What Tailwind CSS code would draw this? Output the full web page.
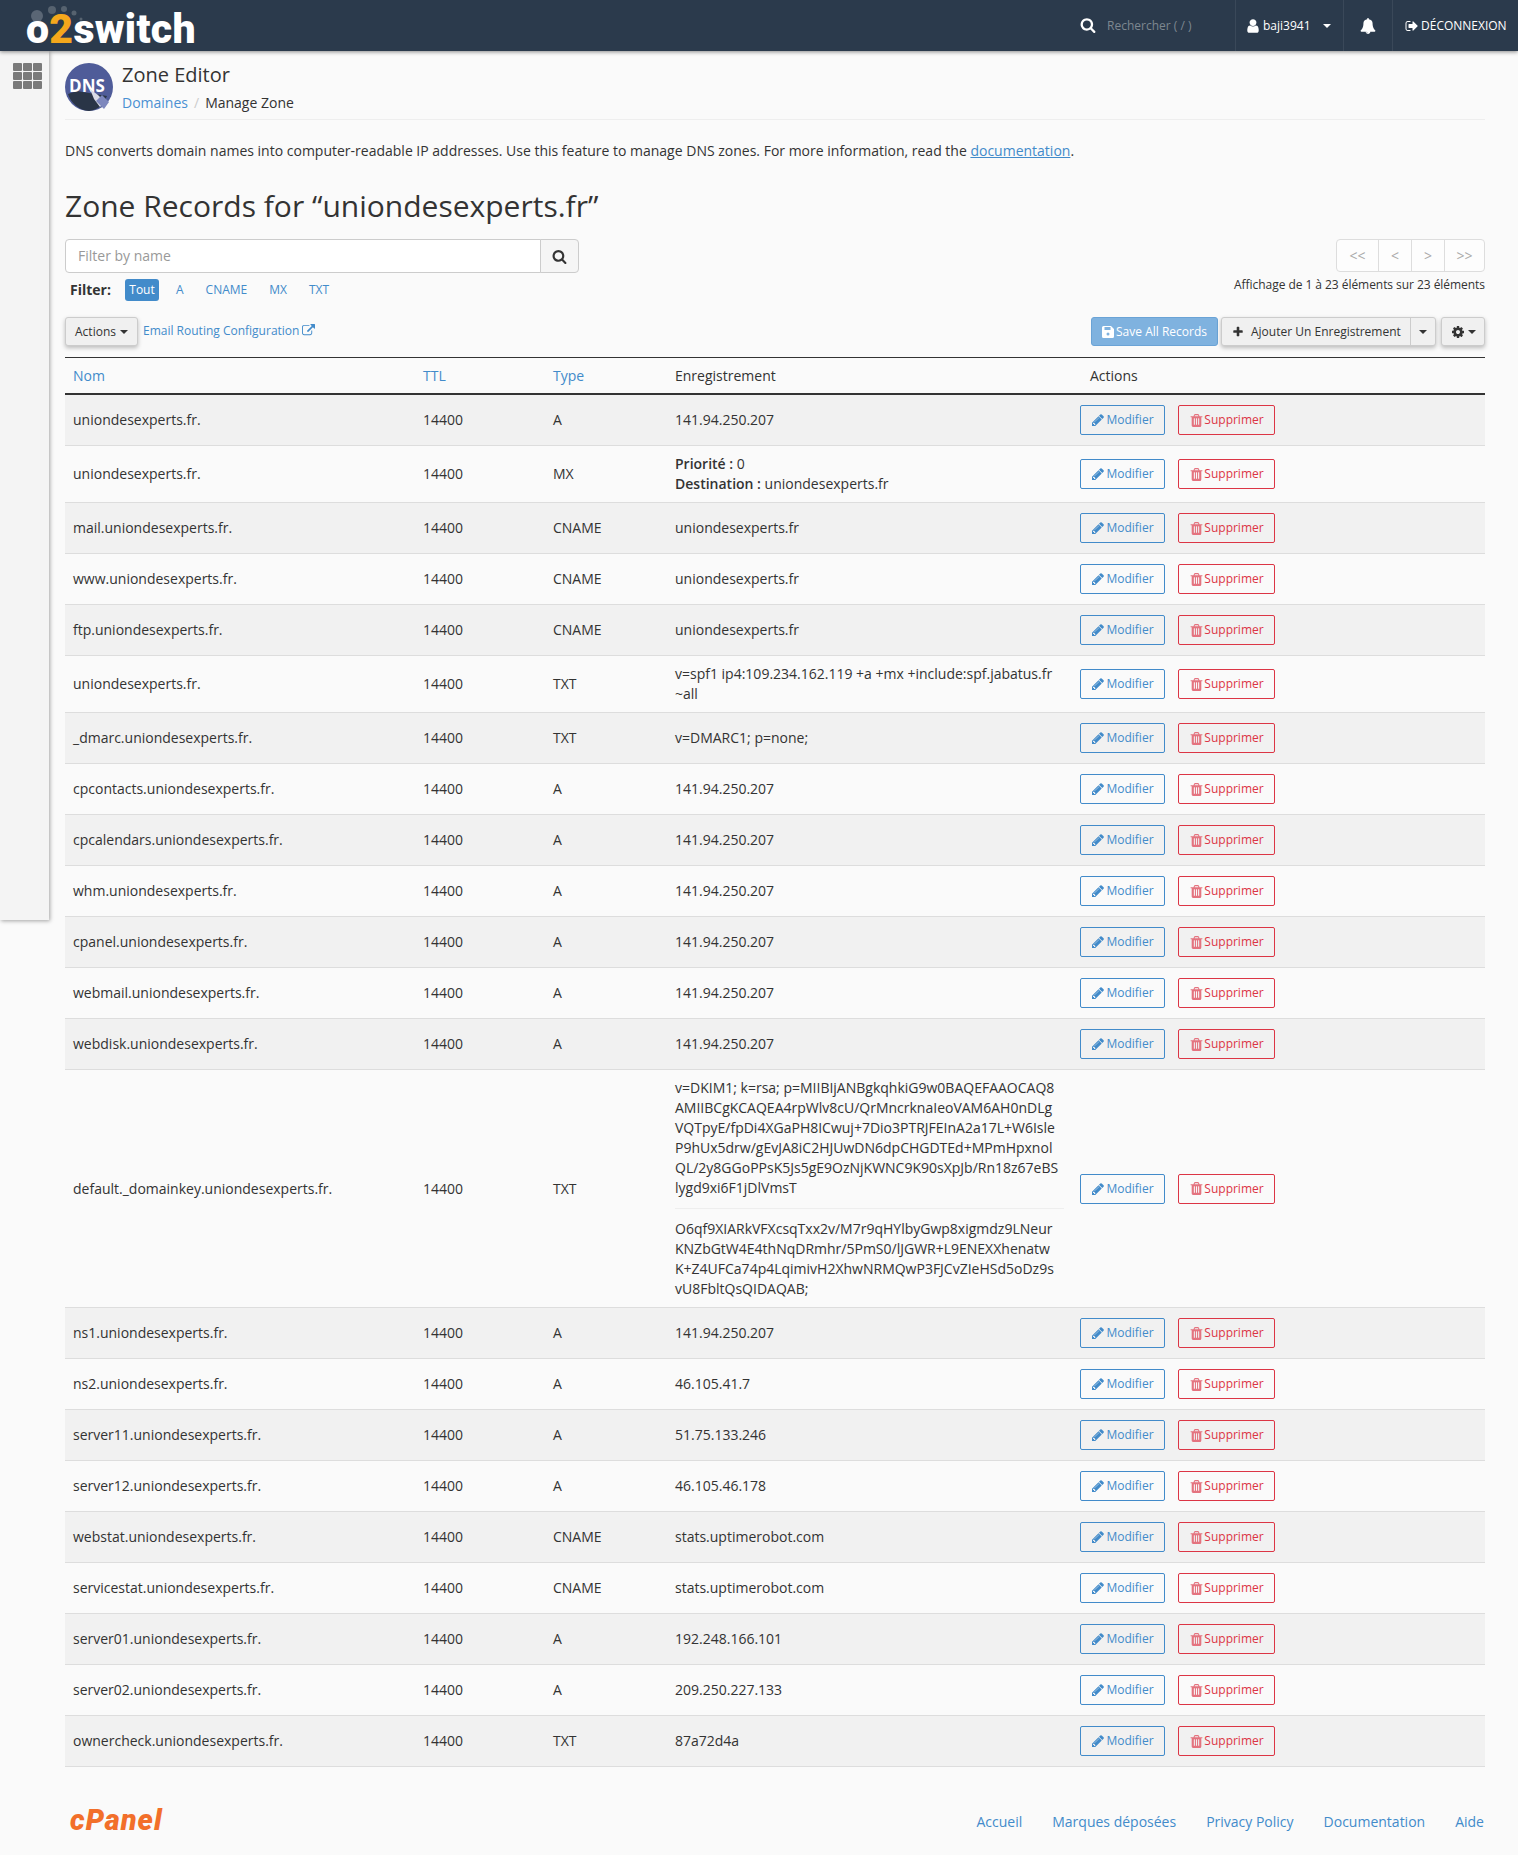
<!DOCTYPE html>
<html lang="fr">
<head>
  <meta charset="UTF-8">
  <title>Zone Editor</title>
  <script src="https://cdn.jsdelivr.net/npm/@tailwindcss/browser@4"></script>
</head>
<body class="bg-[#fafafa] text-[#333] text-[14px] leading-[20px] font-['Open_Sans',sans-serif]">
  <!-- Top bar -->
  <header class="relative z-20 h-[51px] bg-[#2b3a4c] shadow-[0_1px_4px_rgba(0,0,0,0.45)] flex items-center text-white">
    <div class="relative ml-[26px] w-[170px] h-[51px]">
      <svg class="absolute left-[4px] top-[4px]" width="80" height="20" viewBox="0 0 80 20">
        <circle cx="7" cy="12" r="6" fill="#5a6675"/><circle cx="22" cy="6" r="4" fill="#56626f"/><circle cx="34" cy="5" r="3" fill="#56626f"/><circle cx="44" cy="9" r="2.500" fill="#56626f"/><circle cx="51" cy="15" r="1.500" fill="#56626f"/>
      </svg>
      <div class="absolute left-0 top-[6px] text-[41px] leading-[46px] font-black tracking-[0.3px] font-['Roboto',sans-serif] whitespace-nowrap">o<span class="text-[#f5a81c]">2</span>switch</div>
    </div>
    <div class="flex-1"></div>
    <svg class="w-[16px] h-[16px] -mt-[2px] fill-white" viewBox="0 0 1792 1792"><path d="M1216 832q0-185-131.500-316.500t-316.500-131.500-316.500 131.500-131.500 316.500 131.500 316.500 316.500 131.500 316.500-131.500 131.500-316.500zm512 832q0 52-38 90t-90 38q-54 0-90-38l-343-342q-179 124-399 124-143 0-273.500-55.500t-225-150-150-225-55.500-273.500 55.500-273.500 150-225 225-150 273.500-55.500 273.500 55.500 225 150 150 225 55.500 273.500q0 220-124 399l343 343q37 37 37 90z"/></svg>
    <div class="ml-[11px] w-[128px] text-[12px] text-[#7d8790]">Rechercher ( / )</div>
    <div class="h-[51px] w-[108px] border-l border-[#3a4859] flex items-center pl-[9px] text-[12px]">
      <svg class="w-[16px] h-[16px] fill-white" viewBox="0 0 1792 1792"><path d="M1536 1399q0 109-62.500 187t-150.500 78h-854q-88 0-150.500-78t-62.500-187q0-85 8.500-160.500t31.500-152 58.500-131 94-89 134.500-34.500q131 128 313 128t313-128q76 0 134.500 34.500t94 89 58.500 131 31.500 152 8.500 160.500zm-256-887q0 159-112.500 271.500t-271.500 112.500-271.500-112.500-112.500-271.500 112.500-271.500 271.500-112.500 271.500 112.500 112.500 271.500z"/></svg>
      <span class="ml-[2px]">baji3941</span>
      <span class="ml-[12px] w-0 h-0 border-x-[4px] border-x-transparent border-t-[4px] border-t-white"></span>
    </div>
    <div class="h-[51px] w-[49px] border-l border-[#3a4859] flex items-center justify-center">
      <svg class="w-[16px] h-[16px] fill-white" viewBox="0 0 1792 1792"><path d="M912 1696q0-16-16-16-59 0-101.500-42.500t-42.500-101.500q0-16-16-16t-16 16q0 73 51.500 124.500t124.500 51.500q16 0 16-16zm816-288q0 52-38 90t-90 38h-448q0 106-75 181t-181 75-181-75-75-181h-448q-52 0-90-38t-38-90q50-42 91-88t85-119.500 74.500-158.500 50-206 19.500-260q0-152 117-282.500t307-158.500q-8-19-8-39 0-40 28-68t68-28 68 28 28 68q0 20-8 39 190 28 307 158.500t117 282.500q0 139 19.500 260t50 206 74.500 158.500 85 119.500 91 88z"/></svg>
    </div>
    <div class="h-[51px] w-[126px] border-l border-[#3a4859] flex items-center pl-[12px] text-[12px]">
      <svg class="w-[14px] h-[14px] fill-white" viewBox="0 0 1792 1792"><path d="M704 1440q0 4 1 20t.5 26.500-3 23.500-10 19.500-20.500 6.500h-320q-119 0-203.500-84.500t-84.500-203.500v-704q0-119 84.500-203.500t203.500-84.500h320q13 0 22.500 9.500t9.500 22.500q0 4 1 20t.5 26.500-3 23.500-10 19.500-20.500 6.500h-320q-66 0-113 47t-47 113v704q0 66 47 113t113 47h312l11.500 1 11.500 3 8 5.500 7 9 2 13.500zm928-544q0 26-19 45l-544 544q-19 19-45 19t-45-19-19-45v-288h-448q-26 0-45-19t-19-45v-384q0-26 19-45t45-19h448v-288q0-26 19-45t45-19 45 19l544 544q19 19 19 45z"/></svg>
      <span class="ml-[2px]">DÉCONNEXION</span>
    </div>
  </header>

  <div class="flex items-start">
    <!-- Side rail -->
    <aside class="w-[49px] h-[869px] shrink-0 bg-[#f4f4f4] shadow-[1px_1px_4px_rgba(0,0,0,0.35)] pt-[12px] pl-[13px]">
      <div class="grid grid-cols-3 gap-[1.500px] w-[29px]">
        <span class="h-[7.500px] rounded-[1px] bg-[#7a7a7a]"></span><span class="h-[7.500px] rounded-[1px] bg-[#7a7a7a]"></span><span class="h-[7.500px] rounded-[1px] bg-[#7a7a7a]"></span>
        <span class="h-[7.500px] rounded-[1px] bg-[#7a7a7a]"></span><span class="h-[7.500px] rounded-[1px] bg-[#7a7a7a]"></span><span class="h-[7.500px] rounded-[1px] bg-[#7a7a7a]"></span>
        <span class="h-[7.500px] rounded-[1px] bg-[#7a7a7a]"></span><span class="h-[7.500px] rounded-[1px] bg-[#7a7a7a]"></span><span class="h-[7.500px] rounded-[1px] bg-[#7a7a7a]"></span>
      </div>
    </aside>

    <main class="flex-1 min-w-0 pl-[16px] pr-[33px]">
      <!-- Page title -->
      <div class="h-[69px] border-b border-[#eee] pt-[12px] flex">
        <svg class="w-[48px] h-[48px] shrink-0" viewBox="0 0 48 48">
          <circle cx="24" cy="24" r="24" fill="#4f5c99"/>
          <path d="M3 31 L12 28 L42 33 L38 41 A24 24 0 0 1 24 48 A24 24 0 0 1 3 31Z" fill="#2a3547"/>
          <text x="22" y="29" text-anchor="middle" fill="#fff" font-size="17" font-weight="700" font-family="Open Sans">DNS</text>
          <path d="M25 26 L29 36 L35 44 L40 39 L33 32Z" fill="#d9dbe6"/>
          <path d="M31 38 L37 32 L44 39 L39 46Z" fill="#7d87bd"/>
        </svg>
        <div class="ml-[9px]">
          <h1 class="text-[20px] leading-[24px]">Zone Editor</h1>
          <div class="mt-[6px] flex"><a class="text-[#4a90d2]">Domaines</a><span class="mx-[6px] text-[#ccc]">/</span><span>Manage Zone</span></div>
        </div>
      </div>

      <p class="mt-[21px]">DNS converts domain names into computer-readable IP addresses. Use this feature to manage DNS zones. For more information, read the <a class="text-[#428bca] underline">documentation</a>.</p>

      <h2 class="mt-[28px] text-[30px] leading-[33px]">Zone Records for “uniondesexperts.fr”</h2>

      <!-- Filter and pagination -->
      <div class="mt-[17px] flex justify-between items-start h-[78px]">
        <div>
          <div class="flex w-[514px] h-[34px]">
            <div class="flex-1 bg-white border border-[#ccc] rounded-l-[4px] pl-[12px] leading-[32px] text-[#999]">Filter by name</div>
            <div class="w-[39px] -ml-px bg-[#f5f5f5] border border-[#ccc] rounded-r-[4px] flex items-center justify-center">
              <svg class="w-[15px] h-[15px] fill-[#333]" viewBox="0 0 1792 1792"><path d="M1216 832q0-185-131.500-316.500t-316.500-131.500-316.500 131.500-131.500 316.500 131.500 316.500 316.500 131.500 316.500-131.500 131.500-316.500zm512 832q0 52-38 90t-90 38q-54 0-90-38l-343-342q-179 124-399 124-143 0-273.500-55.500t-225-150-150-225-55.500-273.500 55.500-273.500 150-225 225-150 273.500-55.500 273.500 55.500 225 150 150 225 55.500 273.500q0 220-124 399l343 343q37 37 37 90z"/></svg>
            </div>
          </div>
          <div class="mt-[6px] ml-[5px] flex items-center h-[22px] text-[12px] text-[#428bca]">
            <b class="text-[14px] text-[#333] font-bold w-[55px]">Filter:</b>
            <span class="w-[34px] h-[22px] bg-[#428bca] text-white rounded-[3px] text-center leading-[22px]">Tout</span>
            <span class="ml-[17px]">A</span><span class="ml-[22px]">CNAME</span><span class="ml-[22px]">MX</span><span class="ml-[22px]">TXT</span>
          </div>
        </div>
        <div class="flex flex-col items-end">
          <div class="flex h-[33px] border border-[#ddd] rounded-[4px] text-[#aaa] bg-[#fdfdfd]">
            <span class="w-[41px] text-center leading-[31px]">&lt;&lt;</span>
            <span class="w-[33px] border-l border-[#ddd] text-center leading-[31px]">&lt;</span>
            <span class="w-[33px] border-l border-[#ddd] text-center leading-[31px]">&gt;</span>
            <span class="w-[40px] border-l border-[#ddd] text-center leading-[31px]">&gt;&gt;</span>
          </div>
          <div class="mt-[3px] text-[12px] leading-[20px] tracking-[-0.05px]">Affichage de 1 à 23 éléments sur 23 éléments</div>
        </div>
      </div>

      <!-- Toolbar -->
      <div class="flex items-center h-[29px] text-[12px]">
        <div class="h-[29px] w-[73px] bg-[#f0f0f0] border border-[#ccc] rounded-[3px] shadow-[0_2px_4px_rgba(0,0,0,0.25)] flex items-center justify-center">Actions<span class="ml-[4px] w-0 h-0 border-x-[4px] border-x-transparent border-t-[4px] border-t-[#333]"></span></div>
        <a class="ml-[5px] -mt-[2px] text-[#428bca] flex items-center">Email Routing Configuration
          <svg class="ml-[3px] w-[13px] h-[13px] fill-[#428bca]" viewBox="0 0 1792 1792"><path d="M1408 928v320q0 119-84.500 203.500t-203.500 84.500h-832q-119 0-203.500-84.500t-84.500-203.500v-832q0-119 84.500-203.500t203.500-84.500h704q14 0 23 9t9 23v64q0 14-9 23t-23 9h-704q-66 0-113 47t-47 113v832q0 66 47 113t113 47h832q66 0 113-47t47-113v-320q0-14 9-23t23-9h64q14 0 23 9t9 23zm384-864v512q0 26-19 45t-45 19-45-19l-176-176-652 652q-10 10-23 10t-23-10l-114-114q-10-10-10-23t10-23l652-652-176-176q-19-19-19-45t19-45 45-19h512q26 0 45 19t19 45z"/></svg>
        </a>
        <div class="flex-1"></div>
        <div class="h-[29px] w-[127px] bg-[#7fb2df] border border-[#6aa3d6] rounded-[3px] text-white flex items-center justify-center">
          <svg class="w-[12px] h-[12px] mr-[2px]" viewBox="0 0 12 12"><path d="M0 1.500A1.500 1.500 0 0 1 1.500 0H9l3 3v7.500a1.500 1.500 0 0 1-1.500 1.500h-9A1.500 1.500 0 0 1 0 10.500Z" fill="#fff"/><rect x="2.500" y="1" width="6" height="3" fill="#7fb2df"/><circle cx="6" cy="8" r="1.500" fill="#7fb2df"/></svg>
          Save All Records
        </div>
        <div class="ml-[3px] h-[29px] w-[215px] bg-[#f0f0f0] border border-[#ccc] rounded-[3px] shadow-[0_2px_4px_rgba(0,0,0,0.25)] flex items-center">
          <svg class="ml-[10px] w-[12px] h-[12px] fill-[#333]" viewBox="0 0 1792 1792"><path d="M1600 736v192q0 40-28 68t-68 28h-416v416q0 40-28 68t-68 28h-192q-40 0-68-28t-28-68v-416h-416q-40 0-68-28t-28-68v-192q0-40 28-68t68-28h416v-416q0-40 28-68t68-28h192q40 0 68 28t28 68v416h416q40 0 68 28t28 68z"/></svg>
          <span class="ml-[7px] flex-1">Ajouter Un Enregistrement</span>
          <span class="h-[27px] w-[25px] border-l border-[#ccc] flex items-center justify-center"><span class="w-0 h-0 border-x-[4px] border-x-transparent border-t-[4px] border-t-[#333]"></span></span>
        </div>
        <div class="ml-[5px] h-[29px] w-[44px] bg-[#f0f0f0] border border-[#ccc] rounded-[3px] shadow-[0_2px_4px_rgba(0,0,0,0.25)] flex items-center justify-center">
          <svg class="w-[14px] h-[14px] fill-[#333]" viewBox="0 0 1792 1792"><path d="M1152 896q0-106-75-181t-181-75-181 75-75 181 75 181 181 75 181-75 75-181zm512-109v222q0 12-8 23t-20 13l-185 28q-19 54-39 91 35 50 107 138 10 12 10 25t-9 23q-27 37-99 108t-94 71q-12 0-26-9l-138-108q-44 23-91 38-16 136-29 186-7 28-36 28h-222q-14 0-24.500-8.500t-11.500-21.500l-28-184q-49-16-90-37l-141 107q-10 9-25 9-14 0-25-11-126-114-165-168-7-10-7-23 0-12 8-23 15-21 51-66.500t54-70.500q-27-50-41-99l-183-27q-13-2-21-12.500t-8-23.500v-222q0-12 8-23t19-13l186-28q14-46 39-92-40-57-107-138-10-12-10-24 0-10 9-23 26-36 98.500-107.500t94.500-71.500q13 0 26 10l138 107q44-23 91-38 16-136 29-186 7-28 36-28h222q14 0 24.500 8.500t11.500 21.500l28 184q49 16 90 37l142-107q9-9 24-9 13 0 25 10 129 119 165 170 7 8 7 22 0 12-8 23-15 21-51 66.500t-54 70.500q26 50 41 98l183 28q13 2 21 12.500t8 23.500z"/></svg>
          <span class="ml-[3px] w-0 h-0 border-x-[4px] border-x-transparent border-t-[4px] border-t-[#333]"></span>
        </div>
      </div>

      <!-- Records -->
      <table class="mt-[11px] w-full table-fixed border-separate border-spacing-0">
        <colgroup><col class="w-[350px]"><col class="w-[129px]"><col class="w-[124px]"><col class="w-[404px]"><col></colgroup>
        <thead>
          <tr class="text-left">
            <th class="h-[38px] px-[8px] font-normal border-y border-t-[#333] border-b-2 border-b-[#333] text-[#428bca]">Nom</th>
            <th class="px-[8px] font-normal border-t border-b-2 border-[#333] text-[#428bca]">TTL</th>
            <th class="pl-[9px] pr-[7px] font-normal border-t border-b-2 border-[#333] text-[#428bca]">Type</th>
            <th class="pl-[7px] pr-[8px] font-normal border-t border-b-2 border-[#333]">Enregistrement</th>
            <th class="pl-[18px] font-normal border-t border-b-2 border-[#333]">Actions</th>
          </tr>
        </thead>
        <tbody id="rows"></tbody>
      </table>

      <!-- Footer -->
      <footer class="mt-[37px] h-[58px] flex items-start justify-between">
        <div class="ml-[5px] mt-[1px] text-[#f26f2a] text-[29px] leading-[30px] font-black italic tracking-[1px] font-['Roboto',sans-serif]">cPanel</div>
        <nav class="mt-[8px] mr-[1px] flex gap-[30px] text-[#428bca]"><a>Accueil</a><a>Marques déposées</a><a>Privacy Policy</a><a>Documentation</a><a>Aide</a></nav>
      </footer>
    </main>
  </div>

  <script>
    const pencil = '<svg class="w-[14px] h-[14px] mr-[1px] fill-[#428bca]" viewBox="0 0 1792 1792"><path d="M491 1536l91-91-235-235-91 91v107h128v128h107zm523-928q0-22-22-22-10 0-17 7l-542 542q-7 7-7 17 0 22 22 22 10 0 17-7l542-542q7-7 7-17zm-54-192l416 416-832 832h-416v-416zm683 96q0 53-37 90l-166 166-416-416 166-165q36-38 90-38 53 0 91 38l235 234q37 39 37 91z"/></svg>';
    const trash = '<svg class="w-[15px] h-[15px] fill-[#e4737f]" viewBox="0 0 1792 1792"><path d="M704 1376v-704q0-14-9-23t-23-9h-64q-14 0-23 9t-9 23v704q0 14 9 23t23 9h64q14 0 23-9t9-23zm256 0v-704q0-14-9-23t-23-9h-64q-14 0-23 9t-9 23v704q0 14 9 23t23 9h64q14 0 23-9t9-23zm256 0v-704q0-14-9-23t-23-9h-64q-14 0-23 9t-9 23v704q0 14 9 23t23 9h64q14 0 23-9t9-23zm-544-992h448l-48-117q-7-9-17-11h-317q-10 2-17 11zm928 32v64q0 14-9 23t-23 9h-96v948q0 83-47 143.500t-113 60.500h-832q-66 0-113-58.500t-47-141.500v-952h-96q-14 0-23-9t-9-23v-64q0-14 9-23t23-9h309l70-167q15-37 54-63t79-26h320q40 0 79 26t54 63l70 167h309q14 0 23 9t9 23z"/></svg>';

    const ip = '141.94.250.207';
    const zone = 'uniondesexperts.fr';
    const dkim = 'v=DKIM1; k=rsa; p=MIIBIjANBgkqhkiG9w0BAQEFAAOCAQ8<br>AMIIBCgKCAQEA4rpWlv8cU/QrMncrknaIeoVAM6AH0nDLg<br>VQTpyE/fpDi4XGaPH8ICwuj+7Dio3PTRJFEInA2a17L+W6Isle<br>P9hUx5drw/gEvJA8iC2HJUwDN6dpCHGDTEd+MPmHpxnol<br>QL/2y8GGoPPsK5Js5gE9OzNjKWNC9K90sXpJb/Rn18z67eBS<br>lygd9xi6F1jDlVmsT'
      + '<div class="h-px bg-[#eee] my-[10px]"></div>'
      + 'O6qf9XIARkVFXcsqTxx2v/M7r9qHYlbyGwp8xigmdz9LNeur<br>KNZbGtW4E4thNqDRmhr/5PmS0/lJGWR+L9ENEXXhenatw<br>K+Z4UFCa74p4LqimivH2XhwNRMQwP3FJCvZIeHSd5oDz9s<br>vU8FbltQsQIDAQAB;';

    const records = [
      [zone + '.', 'A', ip],
      [zone + '.', 'MX', '<b class="font-semibold">Priorité :</b> 0<br><b class="font-semibold">Destination :</b> ' + zone],
      ['mail.' + zone + '.', 'CNAME', zone],
      ['www.' + zone + '.', 'CNAME', zone],
      ['ftp.' + zone + '.', 'CNAME', zone],
      [zone + '.', 'TXT', 'v=spf1 ip4:109.234.162.119 +a +mx +include:spf.jabatus.fr<br>~all'],
      ['_dmarc.' + zone + '.', 'TXT', 'v=DMARC1; p=none;'],
      ['cpcontacts.' + zone + '.', 'A', ip],
      ['cpcalendars.' + zone + '.', 'A', ip],
      ['whm.' + zone + '.', 'A', ip],
      ['cpanel.' + zone + '.', 'A', ip],
      ['webmail.' + zone + '.', 'A', ip],
      ['webdisk.' + zone + '.', 'A', ip],
      ['default._domainkey.' + zone + '.', 'TXT', dkim],
      ['ns1.' + zone + '.', 'A', ip],
      ['ns2.' + zone + '.', 'A', '46.105.41.7'],
      ['server11.' + zone + '.', 'A', '51.75.133.246'],
      ['server12.' + zone + '.', 'A', '46.105.46.178'],
      ['webstat.' + zone + '.', 'CNAME', 'stats.uptimerobot.com'],
      ['servicestat.' + zone + '.', 'CNAME', 'stats.uptimerobot.com'],
      ['server01.' + zone + '.', 'A', '192.248.166.101'],
      ['server02.' + zone + '.', 'A', '209.250.227.133'],
      ['ownercheck.' + zone + '.', 'TXT', '87a72d4a'],
    ];

    document.getElementById('rows').innerHTML = records.map((r, i) => `
      <tr class="${i % 2 === 0 ? 'bg-[#f1f1f1]' : 'bg-[#fafafa]'}">
        <td class="h-[51px] px-[8px] py-[8px] border-b border-[#ddd]">${r[0]}</td>
        <td class="px-[8px] py-[8px] border-b border-[#ddd]">14400</td>
        <td class="pl-[9px] pr-[7px] py-[8px] border-b border-[#ddd]">${r[1]}</td>
        <td class="pl-[7px] pr-[8px] py-[8px] border-b border-[#ddd] whitespace-nowrap">${r[2]}</td>
        <td class="px-[8px] py-[8px] border-b border-[#ddd]">
          <div class="flex gap-[13px] text-[12px]">
            <span class="w-[85px] h-[30px] border border-[#428bca] rounded-[2px] text-[#428bca] flex items-center justify-center">${pencil}Modifier</span>
            <span class="w-[97px] h-[30px] border border-[#dc3545] rounded-[2px] text-[#dc3545] flex items-center justify-center">${trash}Supprimer</span>
          </div>
        </td>
      </tr>`).join('');
  </script>
</body>
</html>
